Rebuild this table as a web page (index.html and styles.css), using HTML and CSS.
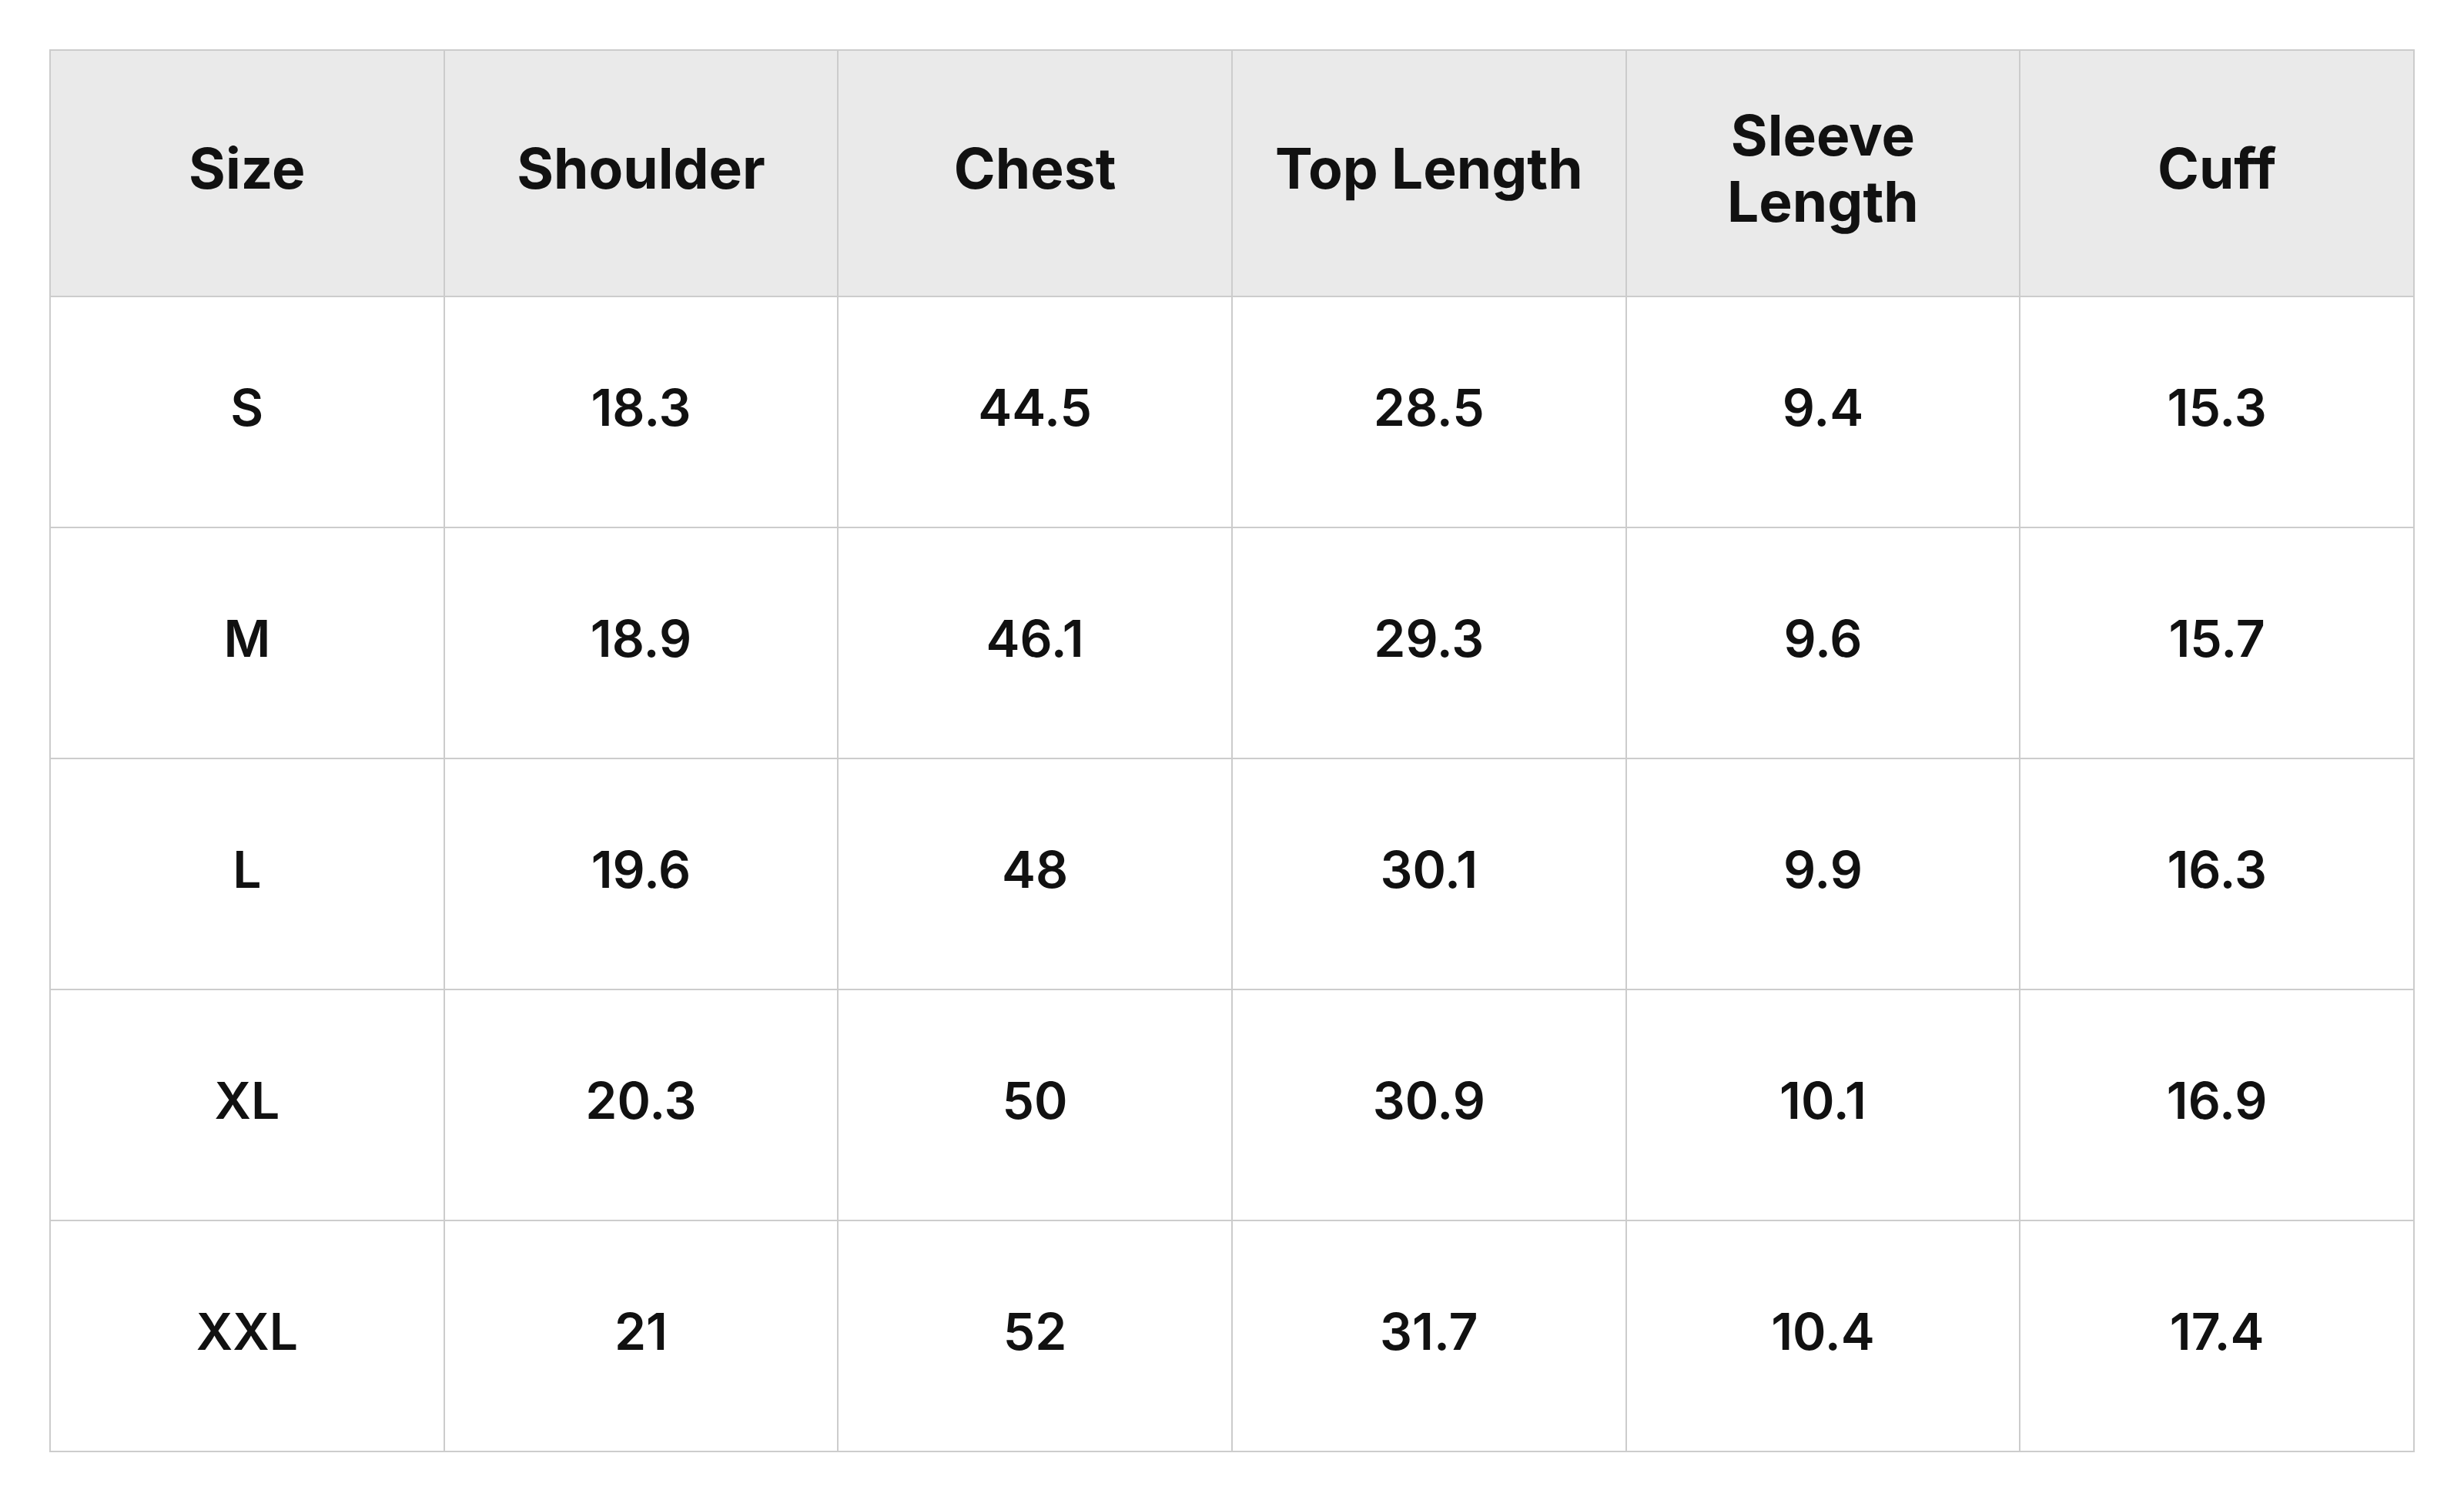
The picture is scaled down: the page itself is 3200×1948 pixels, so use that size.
FILE: index.html
```html
<!DOCTYPE html>
<html lang="en">
<head>
<meta charset="utf-8">
<title>Size Chart</title>
<link rel="stylesheet" href="styles.css">
</head>
<body>
<table class="size-table">
  <thead>
    <tr>
      <th>Size</th>
      <th>Shoulder</th>
      <th>Chest</th>
      <th>Top Length</th>
      <th class="narrow">Sleeve Length</th>
      <th>Cuff</th>
    </tr>
  </thead>
  <tbody>
    <tr><td>S</td><td>18.3</td><td>44.5</td><td>28.5</td><td>9.4</td><td>15.3</td></tr>
    <tr><td>M</td><td>18.9</td><td>46.1</td><td>29.3</td><td>9.6</td><td>15.7</td></tr>
    <tr><td>L</td><td>19.6</td><td>48</td><td>30.1</td><td>9.9</td><td>16.3</td></tr>
    <tr><td>XL</td><td>20.3</td><td>50</td><td>30.9</td><td>10.1</td><td>16.9</td></tr>
    <tr><td>XXL</td><td>21</td><td>52</td><td>31.7</td><td>10.4</td><td>17.4</td></tr>
  </tbody>
</table>
</body>
</html>
```
FILE: styles.css
```css
html, body {
  margin: 0;
  padding: 0;
  background: #ffffff;
}
body {
  padding: 64px;
  font-family: Inter, "Liberation Sans", sans-serif;
  color: #111111;
}
.size-table {
  width: 3072px;
  table-layout: fixed;
  border-collapse: collapse;
}
.size-table thead tr {
  height: 320px;
}
.size-table tbody tr {
  height: 300px;
}
.size-table th,
.size-table td {
  border: 2px solid #cccccc;
  text-align: center;
  vertical-align: middle;
  padding: 0 24px 12px;
}
.size-table th {
  background: #eaeaea;
  font-size: 73px;
  font-weight: 700;
  line-height: 86px;
}
.size-table th.narrow {
  padding: 0 60px 12px;
}
.size-table td {
  font-size: 66px;
  font-weight: 600;
}
```
